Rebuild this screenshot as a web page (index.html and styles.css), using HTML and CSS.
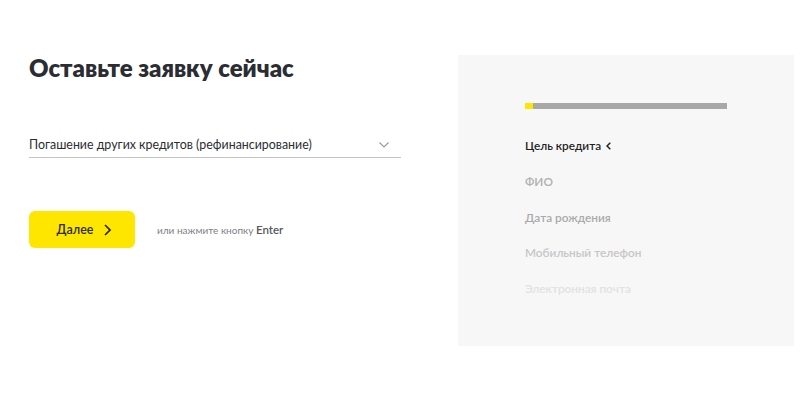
FILE: index.html
```html
<!DOCTYPE html>
<html lang="ru">
<head>
<meta charset="utf-8">
<link rel="stylesheet" href="styles.css">
</head>
<body>
<div class="page">
  <div class="left">
    <h1 class="title">Оставьте заявку сейчас</h1>
    <div class="select">
      <span class="select-value">Погашение других кредитов (рефинансирование)</span>
      <svg class="select-arrow" width="10" height="6" viewBox="0 0 10 6"><path d="M0.5 0.5 L5 5 L9.5 0.5" fill="none" stroke="#9a9a9a" stroke-width="1.1"/></svg>
    </div>
    <div class="actions">
      <button class="btn">Далее
        <svg class="btn-arrow" width="7" height="12" viewBox="0 0 7 12"><path d="M1 1 L6 6 L1 11" fill="none" stroke="#222" stroke-width="1.6"/></svg>
      </button>
      <span class="hint">или нажмите кнопку <b>Enter</b></span>
    </div>
  </div>
  <div class="panel">
    <div class="progress"><div class="progress-fill" style="width:4%"></div></div>
    <ul class="steps">
      <li class="step active">Цель кредита
        <svg class="step-arrow" width="5" height="8" viewBox="0 0 5 8"><path d="M4.3 0.7 L1 4 L4.3 7.3" fill="none" stroke="#222" stroke-width="1.5"/></svg>
      </li>
      <li class="step s2">ФИО</li>
      <li class="step s3">Дата рождения</li>
      <li class="step s4">Мобильный телефон</li>
      <li class="step s5">Электронная почта</li>
    </ul>
  </div>
</div>
</body>
</html>
```
FILE: styles.css
```css
* { box-sizing: border-box; }
html, body { margin: 0; padding: 0; background: #fff; }
body { font-family: "Lato", "Inter", sans-serif; color: #2b2d33; width: 800px; height: 400px; overflow: hidden; }

.page { display: flex; padding-left: 29px; }

.left { width: 372px; padding-top: 53px; }
.title { margin: 0; font-size: 24px; line-height: 30px; font-weight: 800; color: #2b2d33; }

.select { margin-top: 51px; display: flex; align-items: center; justify-content: space-between; height: 24px; border-bottom: 1px solid #c4c4c4; padding-bottom: 2px; }
.select-value { font-size: 12.4px; color: #2b2d33; }
.select-arrow { margin-right: 12px; }

.actions { margin-top: 53px; display: flex; align-items: center; }
.btn { width: 106px; height: 37px; border: 0; border-radius: 6px; background: #fee600; font-family: inherit; font-size: 12.5px; font-weight: 600; color: #2b2d33; display: flex; align-items: center; justify-content: center; gap: 11px; padding: 0 0 0 4px; }
.hint { margin-left: 22px; font-size: 10px; color: #7d7f85; }
.hint b { font-size: 11.5px; font-weight: 600; color: #55575d; }

.panel { margin-left: 57px; margin-top: 55px; width: 336px; height: 291px; background: #f7f7f7; padding: 48px 0 0 67px; }
.progress { width: 202px; height: 6px; background: #a8a8a8; }
.progress-fill { height: 100%; background: #fee600; }

.steps { list-style: none; margin: 29px 0 0; padding: 0; display: flex; flex-direction: column; gap: 19.8px; }
.step { font-size: 11.8px; line-height: 16px; font-weight: 600; display: flex; align-items: center; gap: 5px; }
.step.active { color: #1f1f1f; }
.s2 { color: #b0b0b0; }
.s3 { color: #aaaaaa; }
.s4 { color: #c6c6c6; }
.s5 { color: #e2e2e2; }
```
